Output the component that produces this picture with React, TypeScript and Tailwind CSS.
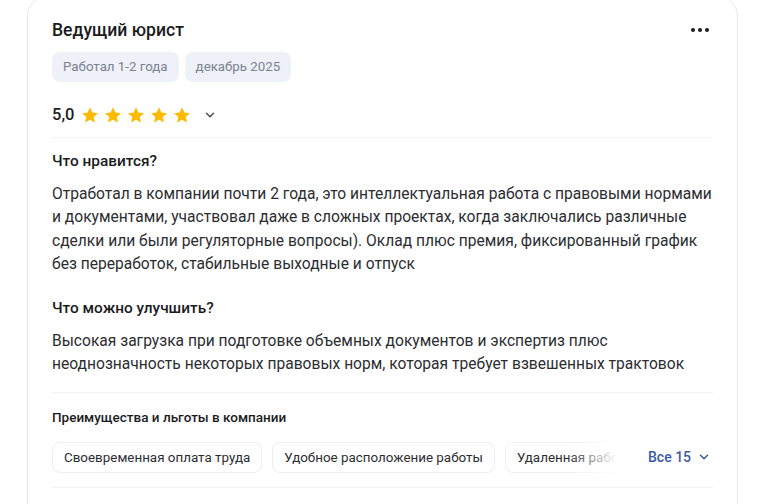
import React from 'react';

const Star = () => (
    <svg width="18" height="18" viewBox="0 0 24 24" fill="#fcbb00">
        <path d="M12 1.8l3.1 6.9 7.5.8-5.6 5.1 1.6 7.4L12 18.2 5.4 22l1.6-7.4L1.4 9.5l7.5-.8z" />
    </svg>
);

const Chevron = ({ className }: { className?: string }) => (
    <svg className={className} width="14" height="14" viewBox="0 0 24 24" fill="none" stroke="currentColor" strokeWidth="2.6" strokeLinecap="round" strokeLinejoin="round">
        <path d="M6 9l6 6 6-6" />
    </svg>
);

const benefits = ['Своевременная оплата труда', 'Удобное расположение работы', 'Удаленная работа'];

const App: React.FC = () => {
    return (
        <div className="w-[768px] h-[504px] overflow-hidden bg-white font-['Roboto',sans-serif]">
            <div className="ml-[27px] w-[711px] -mt-[4px] h-[560px] rounded-[20px] border border-[#e6e8ee] bg-white px-6 pt-[21px]">
                <div className="flex items-start justify-between">
                    <h1 className="text-[17.6px] leading-[24px] font-medium text-[#1c1c1e]">Ведущий юрист</h1>
                    <div className="flex gap-[3px] pt-[10px] pr-[4px]">
                        <span className="w-[4px] h-[4px] rounded-full bg-[#1c1c1e]" />
                        <span className="w-[4px] h-[4px] rounded-full bg-[#1c1c1e]" />
                        <span className="w-[4px] h-[4px] rounded-full bg-[#1c1c1e]" />
                    </div>
                </div>
                <div className="flex gap-[6px] mt-[10px]">
                    <span className="h-[30px] px-[11px] rounded-[8px] bg-[#eef1f7] text-[13.3px] leading-[30px] text-[#7b8291]">Работал 1-2 года</span>
                    <span className="h-[30px] px-[11px] rounded-[8px] bg-[#eef1f7] text-[13.3px] leading-[30px] text-[#7b8291]">декабрь 2025</span>
                </div>
                <div className="flex items-center mt-[21px] h-[24px]">
                    <span className="text-[16.5px] font-medium text-[#1c1c1e] mr-[7px]">5,0</span>
                    <div className="flex gap-[5px]">
                        <Star />
                        <Star />
                        <Star />
                        <Star />
                        <Star />
                    </div>
                    <Chevron className="ml-[12px] text-[#4a4f58]" />
                </div>
                <div className="mt-[10px] border-t border-[#f1f2f5]" />

                <h2 className="mt-[13px] text-[15.4px] leading-[20px] font-medium text-[#1c1c1e]">Что нравится?</h2>
                <p className="mt-[12px] text-[15.6px] leading-[23.3px] text-[#2c2d31]">
                    Отработал в компании почти 2 года, это интеллектуальная работа с правовыми нормами и документами, участвовал даже в сложных проектах, когда заключались различные сделки или были регуляторные вопросы). Оклад плюс премия, фиксированный график без переработок, стабильные выходные и отпуск
                </p>

                <h2 className="mt-[22px] text-[15.4px] leading-[20px] font-medium text-[#1c1c1e]">Что можно улучшить?</h2>
                <p className="mt-[12px] text-[15.6px] leading-[23.3px] text-[#2c2d31]">
                    Высокая загрузка при подготовке объемных документов и экспертиз плюс неоднозначность некоторых правовых норм, которая требует взвешенных трактовок
                </p>
                <div className="mt-[15px] border-t border-[#f1f2f5]" />

                <h3 className="mt-[15px] text-[13.5px] leading-[18px] font-medium text-[#1c1c1e]">Преимущества и льготы в компании</h3>
                <div className="flex items-center mt-[16px]">
                    <div className="relative flex gap-[10px] w-[565px] overflow-hidden">
                        {benefits.map((b) => (
                            <span key={b} className="shrink-0 h-[31px] px-[11px] rounded-[8px] border border-[#eceef2] bg-white text-[13.4px] leading-[29px] text-[#2c2d31]">
                                {b}
                            </span>
                        ))}
                        <div className="absolute right-0 top-0 h-full w-[50px] bg-gradient-to-r from-transparent to-white" />
                    </div>
                    <button className="ml-[31px] flex items-center gap-[6px] text-[14px] font-medium text-[#3b5ba8]">
                        Все 15
                        <Chevron className="text-[#3b5ba8]" />
                    </button>
                </div>
                <div className="mt-[14px] border-t border-[#f1f2f5]" />
            </div>
        </div>
    );
};

export default App;
